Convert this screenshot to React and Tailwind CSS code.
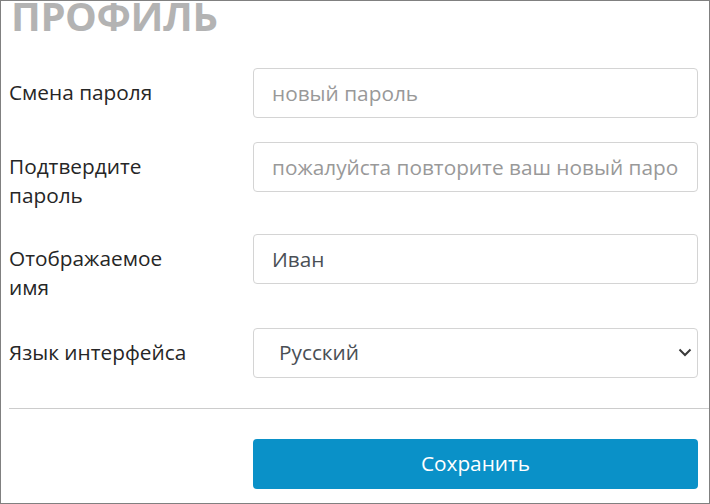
import React from "react";

export default function App() {
  const inputCls =
    "w-full h-[50px] border border-[#d4d4d4] rounded-[4px] pl-[18px] pr-[16px] text-[20.8px] text-[#4a4f55] placeholder:text-[#999999] outline-none bg-white";
  const labelCls = "w-[244px] shrink-0 pt-[10px] text-[20.8px] leading-[29px] text-[#262626]";
  return (
    <div
      className="w-[710px] h-[504px] border border-[#808080] bg-white overflow-hidden"
      style={{ fontFamily: '"Open Sans", "Noto Sans", sans-serif' }}
    >
      <div className="pl-2">
        <h1 className="text-[40px] leading-[44px] font-bold text-[#b3b3b3] mt-[-7px] ml-[2px] mb-[30px] tracking-[-0.4px]">
          ПРОФИЛЬ
        </h1>
        <div className="pr-[11px]">
          <div className="flex mb-6">
            <label className={labelCls}>Смена пароля</label>
            <input type="password" placeholder="новый пароль" className={inputCls} />
          </div>
          <div className="flex mb-6">
            <label className={labelCls}>
              Подтвердите
              <br />
              пароль
            </label>
            <input
              type="password"
              placeholder="пожалуйста повторите ваш новый паро"
              className={inputCls}
            />
          </div>
          <div className="flex mb-[26px]">
            <label className={labelCls}>
              Отображаемое
              <br />
              имя
            </label>
            <input type="text" defaultValue="Иван" className={inputCls} />
          </div>
          <div className="flex">
            <label className={labelCls}>Язык интерфейса</label>
            <div className="relative w-full">
              <select
                defaultValue="ru"
                className="w-full h-[50px] appearance-none border border-[#d4d4d4] rounded-[4px] pl-[25px] pr-10 text-[20.8px] text-[#4a4f55] bg-white outline-none"
              >
                <option value="ru">Русский</option>
                <option value="en">English</option>
              </select>
              <svg
                className="absolute right-[6px] top-[20px] pointer-events-none"
                width="14"
                height="9"
                viewBox="0 0 14 9"
                fill="none"
              >
                <path d="M1.5 1.5 L7 7 L12.5 1.5" stroke="#3a3a3a" strokeWidth="2" />
              </svg>
            </div>
          </div>
        </div>
        <hr className="mt-[30px] border-0 border-t border-[#cccccc]" />
        <div className="flex pr-[11px] mt-[30px]">
          <div className="w-[244px] shrink-0" />
          <button className="w-full h-[50px] rounded-[4px] bg-[#0a91c8] text-white text-[20.8px]">
            Сохранить
          </button>
        </div>
      </div>
    </div>
  );
}
